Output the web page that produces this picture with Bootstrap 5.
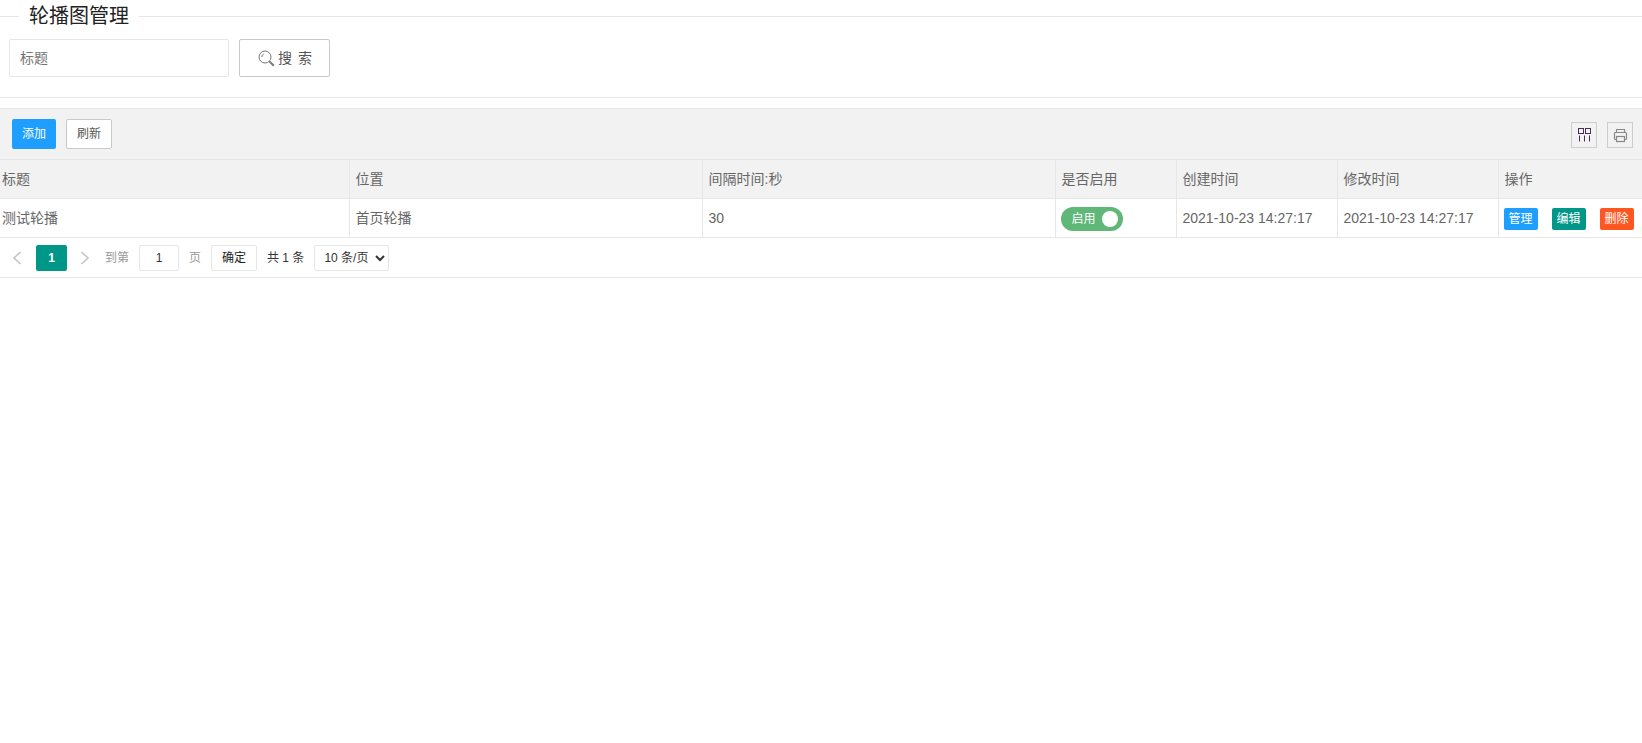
<!DOCTYPE html>
<html lang="zh-CN">
<head>
<meta charset="utf-8">
<title>轮播图管理</title>
<link rel="stylesheet" href="https://cdn.jsdelivr.net/npm/bootstrap@5.3.0/dist/css/bootstrap.min.css">
<style>
body{font-family:"Liberation Sans","Noto Sans CJK SC",sans-serif;font-size:14px;color:#666;background:#fff;overflow:hidden}
.head-fs{border:0;border-top:1px solid #e6e6e6;margin:1px 0 0;padding:0;height:96px;display:block}
.head-fs legend{float:none;width:auto;margin:0 0 0 19px;padding:0 10px;font-size:20px;line-height:30px;color:#222;display:block;height:30px}
.sch-row{padding:8px 0 0 9px;gap:10px}
.sch-input{width:220px;height:38px;border:1px solid #e6e6e6;border-radius:2px;padding:0 10px;font-size:14px;color:#666;background:#fff}
.sch-input::placeholder{color:#757575;opacity:1}
.sch-btn{width:91px;height:38px;border:1px solid #c9c9c9;border-radius:2px;background:#fff;color:#555;font-size:14px;padding:0 0 0 2px;letter-spacing:1px;gap:3px}
.sep{height:1px;background:#e6e6e6;margin:0 0 10px}
.tool-bar{height:51px;background:#f2f2f2;border-top:1px solid #e6e6e6;padding:0 9px 0 12px}
.add-btn{height:30px;width:44px;background:#1e9fff;color:#fff;border:0;border-radius:2px;font-size:12px;padding:0}
.ref-btn{height:30px;width:46px;background:#fff;color:#555;border:1px solid #c9c9c9;border-radius:2px;font-size:12px;padding:0}
.ico-btn{width:26px;height:26px;border:1px solid #ccc;background:transparent;padding:0;display:flex;align-items:center;justify-content:center}
.ico-gap{gap:10px;padding-top:2px}
.data-tb{table-layout:fixed;width:100%;border-collapse:collapse;margin:0;color:#666}
.data-tb th,.data-tb td{font-weight:400;font-size:14px;height:39px;padding:0 5px 0 6px;border:1px solid #e6e6e6;border-left:0;vertical-align:middle;white-space:nowrap;overflow:hidden}
.data-tb th{background:#f2f2f2;color:#666}
.data-tb th:first-child,.data-tb td:first-child{padding-left:2px}
.data-tb th:last-child,.data-tb td:last-child{border-right:0}
.data-tb td.ctl-cell{padding:2px 5px 0}
.sw{display:inline-flex;align-items:center;justify-content:space-between;width:62px;height:24px;border-radius:12px;background:#5fb878;color:#fff;font-size:12px;padding:0 5px 0 11px;vertical-align:middle}
.sw i{display:block;width:16px;height:16px;border-radius:50%;background:#fff}
.op{display:inline-block;width:34px;height:22px;line-height:22px;border-radius:2px;color:#fff;font-size:12px;text-align:center;vertical-align:middle}
.op-gap{gap:14px}
.op-blue{background:#1e9fff}.op-green{background:#009688}.op-red{background:#ff5722}
.pager{height:40px;border-bottom:1px solid #e6e6e6;padding:1px 0 0 12px;font-size:12px;color:#999}
.pg-ar{width:10px;height:14px;margin-right:14px}
.pg-cur{width:31px;height:26px;line-height:26px;background:#009688;color:#fff;border-radius:2px;text-align:center;margin-right:13px;font-weight:700}
.pg-in{width:40px;height:26px;border:1px solid #e6e6e6;border-radius:2px;text-align:center;font-size:12px;margin:0 10px;color:#333;padding:0;line-height:24px}
.pg-page{margin-right:10px}
.pg-ok{width:46px;height:26px;border:1px solid #e6e6e6;border-radius:2px;background:#fff;color:#222;font-size:12px;padding:0;margin-right:10px}
.pg-tot{color:#333;margin-right:10px}
.pg-sel{width:75px;height:26px;border:1px solid #e6e6e6;border-radius:2px;background:#fff;color:#333;font-size:12px;padding:0 0 0 5px;font-family:inherit}
</style>
</head>
<body>
<fieldset class="head-fs">
  <legend>轮播图管理</legend>
  <div class="d-flex sch-row">
    <input class="sch-input" type="text" placeholder="标题">
    <button class="sch-btn d-flex align-items-center justify-content-center" type="button">
      <svg width="17" height="17" viewBox="0 0 17 17" fill="none" stroke="#777" stroke-width="1"><circle cx="7" cy="7" r="6"/><path d="M3.800 7a3.200 3.200 0 0 1 2-3"/><path d="M11.400 11.400l4.400 4.400" stroke-width="2"/></svg>
      <span>搜 索</span>
    </button>
  </div>
</fieldset>
<div class="sep"></div>
<div class="tool-bar d-flex align-items-center justify-content-between">
  <div class="d-flex" style="gap:10px">
    <button class="add-btn" type="button">添加</button>
    <button class="ref-btn" type="button">刷新</button>
  </div>
  <div class="d-flex ico-gap">
    <span class="ico-btn"><svg width="13" height="14" viewBox="0 0 13 14" fill="none" stroke="#4a2c5a"><rect x="0.500" y="0.500" width="5" height="5"/><rect x="7.500" y="0.500" width="5" height="5"/><path d="M1.500 7.500v6M6.500 7.500v6M11.500 7.500v6"/></svg></span>
    <span class="ico-btn"><svg width="15" height="15" viewBox="0 0 15 15" fill="none" stroke="#888" stroke-width="1.200"><path d="M3.500 4.500v-3h8v3"/><path d="M3.500 11.500h-1a1 1 0 0 1-1-1v-5a1 1 0 0 1 1-1h10a1 1 0 0 1 1 1v5a1 1 0 0 1-1 1h-1"/><rect x="3.500" y="8.500" width="8" height="5"/></svg></span>
  </div>
</div>
<table class="data-tb">
  <colgroup><col style="width:349px"><col style="width:353px"><col style="width:353px"><col style="width:121px"><col style="width:161px"><col style="width:161px"><col></colgroup>
  <thead>
    <tr><th>标题</th><th>位置</th><th>间隔时间:秒</th><th>是否启用</th><th>创建时间</th><th>修改时间</th><th>操作</th></tr>
  </thead>
  <tbody>
    <tr>
      <td>测试轮播</td><td>首页轮播</td><td>30</td>
      <td class="ctl-cell"><span class="sw">启用<i></i></span></td>
      <td>2021-10-23 14:27:17</td><td>2021-10-23 14:27:17</td>
      <td class="ctl-cell"><div class="d-flex op-gap"><span class="op op-blue">管理</span><span class="op op-green">编辑</span><span class="op op-red">删除</span></div></td>
    </tr>
  </tbody>
</table>
<div class="pager d-flex align-items-center">
  <svg class="pg-ar" viewBox="0 0 10 14" fill="none" stroke="#c2c2c2" stroke-width="1.500"><path d="M8.500 1l-6.500 6 6.500 6"/></svg>
  <span class="pg-cur">1</span>
  <svg class="pg-ar" style="margin-right:15px" viewBox="0 0 10 14" fill="none" stroke="#c2c2c2" stroke-width="1.500"><path d="M1.500 1l6.500 6-6.500 6"/></svg>
  <span>到第</span>
  <span class="pg-in">1</span>
  <span class="pg-page">页</span>
  <button class="pg-ok" type="button">确定</button>
  <span class="pg-tot">共 1 条</span>
  <select class="pg-sel"><option>10 条/页</option></select>
</div>
</body>
</html>
